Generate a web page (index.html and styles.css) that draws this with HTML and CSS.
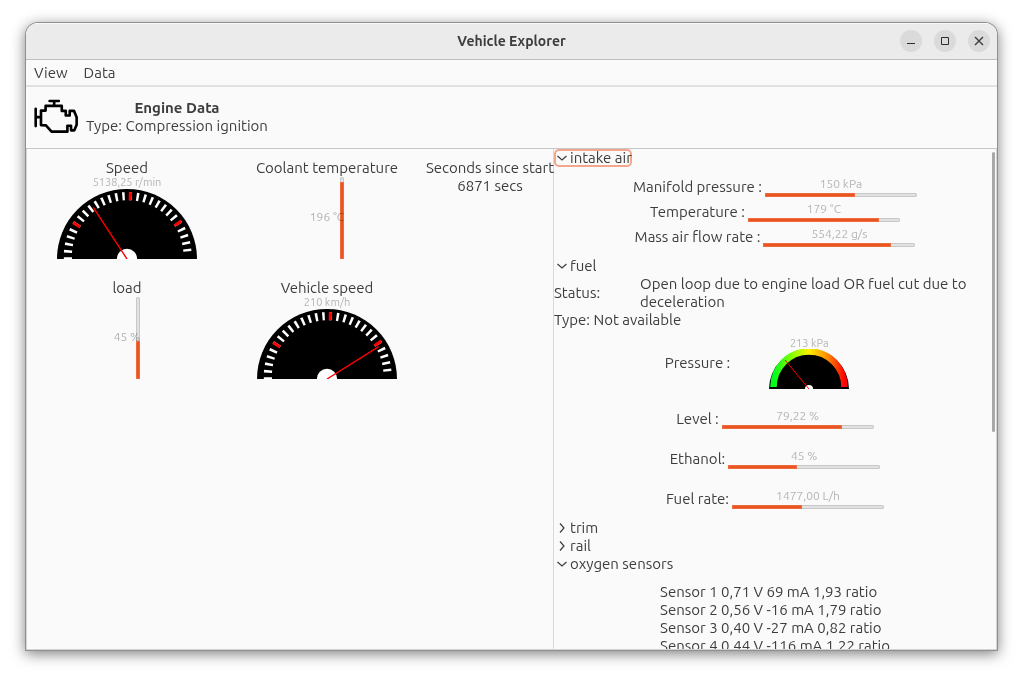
FILE: index.html
```html
<!DOCTYPE html>
<html lang="en">
<head>
<meta charset="utf-8">
<title>Vehicle Explorer</title>
<link rel="stylesheet" href="styles.css">
</head>
<body>
<svg width="0" height="0" class="defs" aria-hidden="true">
  <defs>
    <linearGradient id="heat" x1="0" x2="1" y1="0" y2="0">
      <stop offset="0" stop-color="#00ff20"/>
      <stop offset=".25" stop-color="#80ff00"/>
      <stop offset=".5" stop-color="#ffee00"/>
      <stop offset=".75" stop-color="#ff9000"/>
      <stop offset="1" stop-color="#ff0000"/>
    </linearGradient>
    <symbol id="dial" viewBox="0 0 138 70">
      <circle cx="69" cy="70" r="69" fill="#000"/>
      <g fill="none" stroke-width="8" transform="rotate(-3.6 69.7 67)">
        <path d="M10.7 67A59 59 0 0 1 128.7 67" pathLength="180" stroke="#fff" stroke-dasharray="2.4 4.4"/>
        <path d="M10.7 67A59 59 0 0 1 128.7 67" pathLength="180" stroke="#f00" stroke-dasharray="0 33.5 3 58.2 3 51.4 3 100"/>
      </g>
      <circle cx="69" cy="70" r="10" fill="#fff"/>
    </symbol>
    <symbol id="down" viewBox="0 0 12 12"><path d="M1.500 4l4.500 4 4.500-4" fill="none" stroke="#3d3d3d" stroke-width="1.200"/></symbol>
    <symbol id="right" viewBox="0 0 12 12"><path d="M4 1.500l4 4.500-4 4.500" fill="none" stroke="#3d3d3d" stroke-width="1.200"/></symbol>
  </defs>
</svg>

<main class="window">
  <header class="titlebar">
    <h1 class="title">Vehicle Explorer</h1>
    <div class="controls">
      <button class="control" aria-label="Minimize"><svg width="22" height="22"><path d="M7 13.500h8" stroke="#2d2d2d"/></svg></button>
      <button class="control" aria-label="Maximize"><svg width="22" height="22"><path d="M7.500 7.500h7v7h-7z" fill="none" stroke="#2d2d2d"/></svg></button>
      <button class="control" aria-label="Close"><svg width="22" height="22"><path d="M7 7l8 8M15 7l-8 8" stroke="#3d3d3d" stroke-width="1.400"/></svg></button>
    </div>
  </header>

  <nav class="menubar">
    <button class="menu">View</button>
    <button class="menu">Data</button>
  </nav>

  <section class="summary-bar">
    <svg class="engine" viewBox="101 298 136 106" aria-hidden="true">
      <g fill="none" stroke="#000" stroke-width="8" stroke-linecap="round" stroke-linejoin="round">
        <path d="M148 304H176M162 306V318M106 328V380M106 353H120"/>
        <path d="M122 377V333H136V319H185V334H197V348H209V334H222L230 353V376L223 393H213V379H202V397H154L137 378Z"/>
      </g>
    </svg>
    <div class="summary-text">
      <h2 class="heading">Engine Data</h2>
      <p class="line">Type: Compression ignition</p>
    </div>
  </section>

  <div class="panes">
    <section class="gauges">
      <div class="gauge">
        <span>Speed</span>
        <span class="dial-value">5138,25 r/min</span>
        <svg class="dial" viewBox="0 0 138 70"><use href="#dial"/><path d="M69 70L35.700 19" stroke="#f00" stroke-width="1.400"/></svg>
      </div>
      <div class="gauge">
        <span>Coolant temperature</span>
        <div class="level"><span class="value">196 °C</span><div class="column"><div class="column-fill" style="height:94%"></div></div></div>
      </div>
      <div class="gauge">
        <span>Seconds since start</span>
        <span>6871 secs</span>
      </div>
      <div class="gauge">
        <span>load</span>
        <div class="level"><span class="value">45 %</span><div class="column"><div class="column-fill" style="height:46%"></div></div></div>
      </div>
      <div class="gauge">
        <span>Vehicle speed</span>
        <span class="dial-value">210 km/h</span>
        <svg class="dial" viewBox="0 0 138 70"><use href="#dial"/><path d="M69 70L120 38" stroke="#f00" stroke-width="1.400"/></svg>
      </div>
    </section>

    <section class="details">
      <details open>
        <summary class="expander focused"><svg class="arrow"><use href="#down"/></svg>intake air</summary>
        <div class="rows">
          <div class="row"><span>Manifold pressure :</span><div class="meter"><span class="value">150 kPa</span><div class="track"><div class="fill" style="width:59%"></div></div></div></div>
          <div class="row"><span>Temperature :</span><div class="meter"><span class="value">179 °C</span><div class="track"><div class="fill" style="width:86%"></div></div></div></div>
          <div class="row"><span>Mass air flow rate :</span><div class="meter"><span class="value">554,22 g/s</span><div class="track"><div class="fill" style="width:84%"></div></div></div></div>
        </div>
      </details>
      <details open>
        <summary class="expander"><svg class="arrow"><use href="#down"/></svg>fuel</summary>
        <div class="status"><span class="status-label">Status:</span><span class="status-text">Open loop due to engine load OR fuel cut due to deceleration</span></div>
        <p class="line">Type: Not available</p>
        <div class="rows loose">
          <div class="row"><span>Pressure :</span><div class="meter centered"><span class="dial-value">213 kPa</span>
            <svg class="small-dial" viewBox="0 0 80 40"><circle cx="40" cy="40" r="40"/><path d="M4.500 38A35.500 35.500 0 0 1 75.500 38" fill="none" stroke="url(#heat)" stroke-width="6.500"/><circle cx="40" cy="40" r="4" fill="#fff"/><path d="M40 40L16 11" stroke="#f00"/></svg></div></div>
          <div class="row"><span>Level :</span><div class="meter"><span class="value">79,22 %</span><div class="track"><div class="fill" style="width:79%"></div></div></div></div>
          <div class="row"><span>Ethanol:</span><div class="meter"><span class="value">45 %</span><div class="track"><div class="fill" style="width:45%"></div></div></div></div>
          <div class="row"><span>Fuel rate:</span><div class="meter"><span class="value">1477,00 L/h</span><div class="track"><div class="fill" style="width:46%"></div></div></div></div>
        </div>
      </details>
      <details><summary class="expander"><svg class="arrow"><use href="#right"/></svg>trim</summary></details>
      <details><summary class="expander"><svg class="arrow"><use href="#right"/></svg>rail</summary></details>
      <details open>
        <summary class="expander"><svg class="arrow"><use href="#down"/></svg>oxygen sensors</summary>
        <ul class="sensors">
          <li>Sensor 1 0,71 V 69 mA 1,93 ratio</li>
          <li>Sensor 2 0,56 V -16 mA 1,79 ratio</li>
          <li>Sensor 3 0,40 V -27 mA 0,82 ratio</li>
          <li>Sensor 4 0,44 V -116 mA 1,22 ratio</li>
        </ul>
      </details>
      <div class="thumb"></div>
    </section>
  </div>
</main>
</body>
</html>
```
FILE: styles.css
```css
* { box-sizing: border-box; }

body {
  margin: 0;
  height: 100vh;
  padding: 23px 26px 29px;
  background: #fff;
  color: #3d3d3d;
  font: 15px/18px Ubuntu, "Noto Sans", sans-serif;
}

.defs { position: absolute; }

.window {
  display: flex;
  flex-direction: column;
  height: 100%;
  overflow: hidden;
  background: #fafafa;
  border-radius: 12px 12px 0 0;
  box-shadow: 0 0 0 1px #909090, 0 3px 14px 1px rgba(0, 0, 0, .5);
}

.titlebar {
  display: grid;
  grid-template-columns: 1fr auto 1fr;
  align-items: center;
  height: 37px;
  padding: 0 7px;
  background: #ebebeb;
  border-bottom: 1px solid #bfbfbf;
  box-shadow: inset 0 1px #f8f8f8;
}

.title, .heading {
  margin: 0;
  font-size: 15px;
  line-height: 18px;
  font-weight: bold;
}

.title {
  grid-column: 2;
  font-size: 14px;
}

.controls {
  display: flex;
  justify-content: flex-end;
  gap: 12px;
}

.control {
  width: 22px;
  height: 22px;
  padding: 0;
  border: 0;
  border-radius: 50%;
  background: #dadada;
}

.control svg { display: block; }

.menubar {
  display: flex;
  gap: 16px;
  height: 27px;
  padding: 0 8px;
  border-bottom: 2px solid #e1e1e1;
}

.menu {
  padding: 0;
  border: 0;
  background: none;
  color: inherit;
  font: inherit;
}

.summary-bar {
  display: flex;
  align-items: center;
  gap: 7px;
  height: 62px;
  padding: 0 8px 2px;
  border-bottom: 1px solid #c6c6c6;
}

.engine { width: 45px; height: 35px; }
.summary-text { text-align: center; }
.line { margin: 0; }

.panes {
  display: grid;
  grid-template-columns: 527fr 442fr;
  flex: 1;
  min-height: 0;
  border: 1px solid #d4d4d4;
  border-top: 0;
}

.gauges {
  display: grid;
  grid-template-columns: 1fr 1fr 126px;
  grid-auto-rows: 100px;
  row-gap: 20px;
  padding-top: 10px;
  border-right: 1px solid #d9d9d9;
}

.gauge {
  display: flex;
  flex-direction: column;
  align-items: center;
  white-space: nowrap;
}

.dial-value {
  color: #b5b5b5;
  font-size: 11px;
  line-height: 11px;
}

.dial { width: 140px; height: 71px; }

.value {
  color: #b5b5b5;
  font-size: 12px;
  line-height: 14px;
}

.level {
  display: grid;
  align-items: center;
  height: 82px;
}

.level .value, .column { grid-area: 1 / 1; }

.column {
  display: flex;
  align-items: flex-end;
  justify-self: end;
  width: 4px;
  height: 100%;
  border-radius: 2px;
  background: #e1e1e1;
  box-shadow: inset 0 0 0 1px #c8c8c8;
}

.column-fill, .fill {
  border-radius: 1px;
  background: #e95420;
  box-shadow: inset 0 0 0 1px #ee6b3d;
}

.column-fill { width: 100%; }

.level .value {
  z-index: 1;
  padding-bottom: 3px;
  mix-blend-mode: multiply;
}

.details {
  position: relative;
  overflow: hidden;
}

.expander {
  display: flex;
  align-items: center;
  gap: 2px;
  width: fit-content;
  height: 18px;
  padding-left: 2px;
  white-space: nowrap;
}

.focused {
  border-radius: 5px;
  box-shadow: inset 0 0 0 2px #f4a68c;
}

.arrow { width: 12px; height: 12px; }

.rows {
  display: flex;
  flex-direction: column;
  align-items: center;
  gap: 5px;
  padding: 10px 0;
}

.loose { gap: 20px; padding-top: 8px; }

.row {
  display: flex;
  align-items: center;
  gap: 3px;
}

.meter {
  display: flex;
  flex-direction: column;
  gap: 2px;
  width: 152px;
  text-align: center;
}

.centered { align-items: center; gap: 0; }
.centered .dial-value { line-height: 12px; }
.small-dial { width: 80px; height: 40px; }

.track {
  height: 4px;
  border-radius: 2px;
  background: #e1e1e1;
  box-shadow: inset 0 0 0 1px #c8c8c8;
}

.fill { height: 100%; }

.status { display: flex; align-items: center; }
.status-label { flex: 0 0 86px; }
.status-text { padding-right: 20px; }

.sensors {
  width: fit-content;
  margin: 0 auto;
  padding: 10px 0;
  list-style: none;
  white-space: nowrap;
}

.thumb {
  position: absolute;
  top: 3px;
  right: 1px;
  width: 3px;
  height: 56%;
  border-radius: 2px;
  background: #a8a8a8;
}
```
